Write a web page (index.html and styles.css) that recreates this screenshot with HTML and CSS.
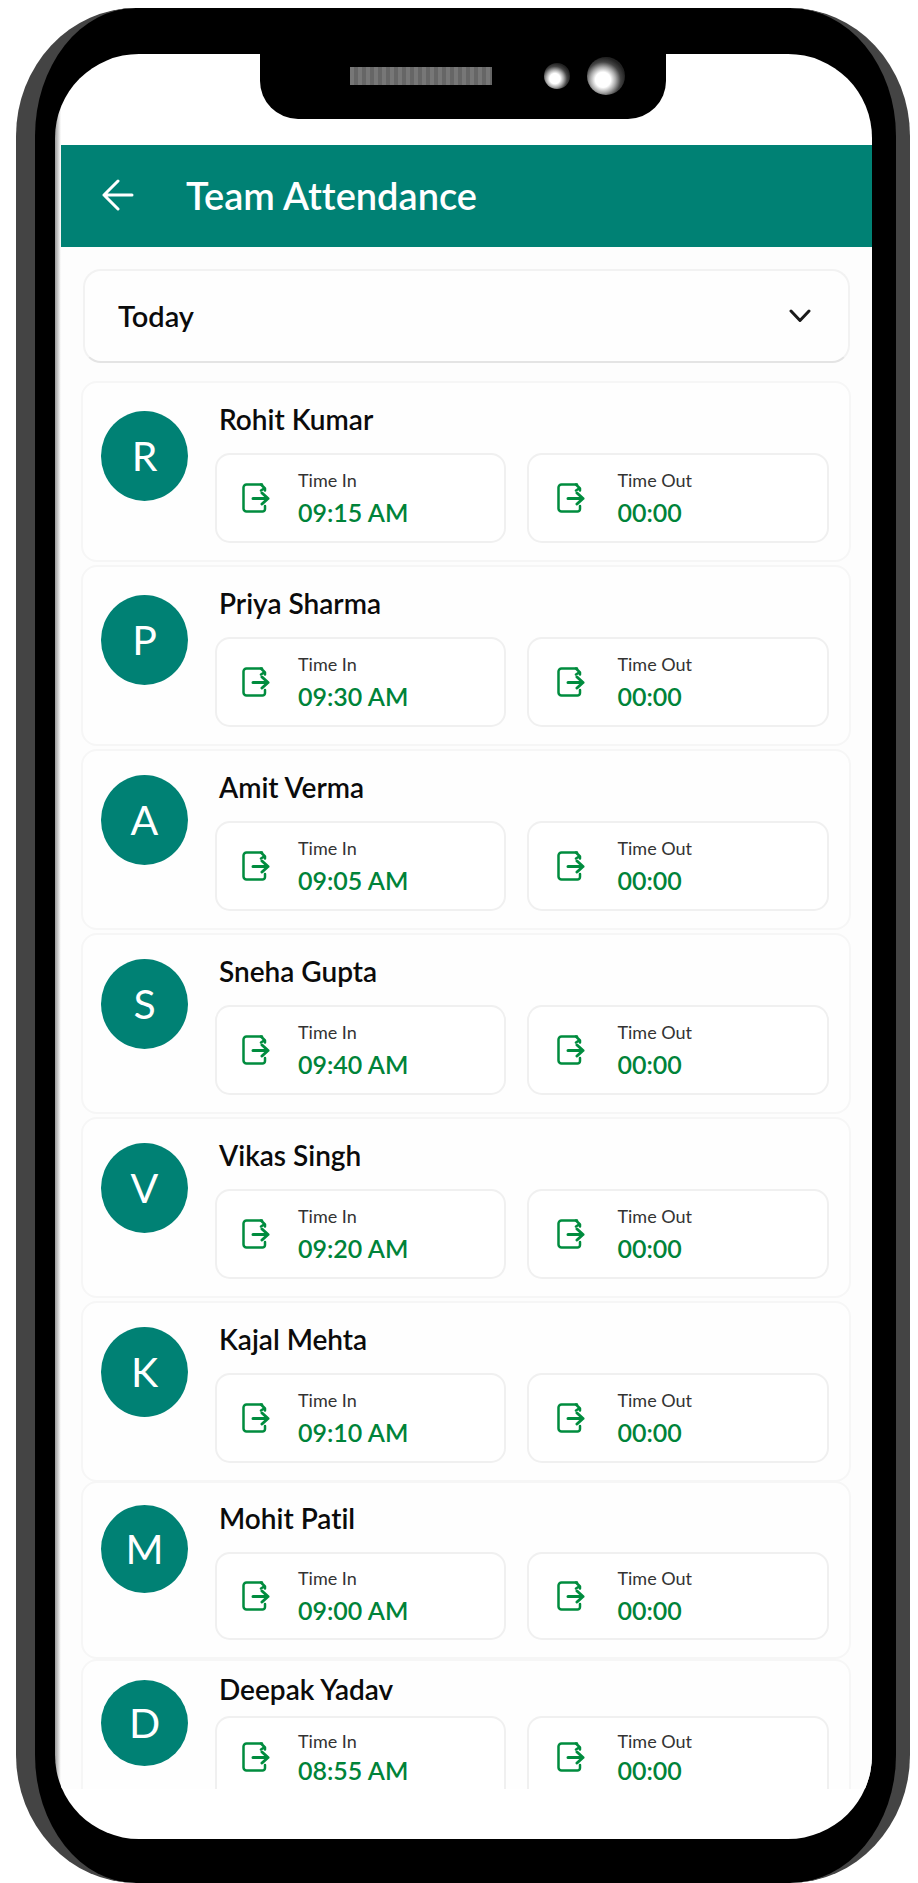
FILE: index.html
```html
<!DOCTYPE html>
<html lang="en">
<head>
  <meta charset="UTF-8">
  <meta name="viewport" content="width=device-width, initial-scale=1.0">
  <title>Team Attendance</title>
  <link rel="stylesheet" href="styles.css">
</head>
<body>
  <svg width="0" height="0" class="sprite" aria-hidden="true">
    <symbol id="icon-exit" viewBox="0 0 28 30">
      <path d="M20 1.500H4.500a3 3 0 0 0-3 3v21a3 3 0 0 0 3 3H20.500a2.500 2.500 0 0 0 2.500-2.500V23" />
      <path d="M19 1.500L23 5.500V7.500M19 7.500L22 5.500" />
      <path class="arrow" d="M11 15.500H26M20 10L26 15.500L20 21" />
    </symbol>
  </svg>

  <div class="phone">
    <div class="screen">
      <div class="notch">
        <span class="speaker"></span>
        <span class="sensor"></span>
        <span class="camera"></span>
      </div>
      <div class="app">
        <header class="app-header">
          <button class="back-button" aria-label="Back">
            <svg width="32" height="32" viewBox="0 0 32 32"><path d="M30 16H2M16 2L2 16L16 30" /></svg>
          </button>
          <h1 class="title">Team Attendance</h1>
        </header>
        <main class="content">
          <div class="filter">
            <select class="filter-select" aria-label="Period">
              <option>Today</option>
              <option>Yesterday</option>
              <option>This Week</option>
            </select>
            <svg class="chevron" width="22" height="14" viewBox="0 0 22 14"><path d="M2 2L11 11.500L20 2" /></svg>
          </div>
          <div class="team" id="team"></div>
        </main>
      </div>
    </div>
  </div>

  <script src="script.js"></script>
</body>
</html>
```
FILE: styles.css
```css
* {
  box-sizing: border-box;
}
body {
  font-family: Lato, "Liberation Sans", sans-serif;
  font-variant-ligatures: none;
  margin: 0;
  padding: 8px 8px 0 16px;
  background: #fff;
  overflow: hidden;
}
.sprite {
  position: absolute;
}
.phone {
  height: calc(100vh - 8px);
  min-height: 600px;
  padding: 46px 24px 44px 20px;
  background: #000;
  border: 0 solid #444;
  border-left-width: 19px;
  border-right-width: 14px;
  border-radius: 120px / 128px;
}
.screen {
  height: 100%;
  display: flex;
  flex-direction: column;
  background: linear-gradient(90deg, #999, #fff 6px);
  border-radius: 84px;
  overflow: hidden;
  padding: 0 0 50px 6px;
}
.notch {
  height: 65px;
  width: 406px;
  flex-shrink: 0;
  margin: 0 auto 26px 199px;
  padding: 0 40px 21px 90px;
  display: flex;
  align-items: center;
  background: #000;
  border-radius: 0 0 38px 38px;
}
.speaker {
  width: 142px;
  height: 18px;
  margin-right: 52px;
  background: repeating-linear-gradient(90deg, #777 0 4px, #666 4px 8px);
}
.sensor, .camera {
  flex-shrink: 0;
  border-radius: 50%;
  background: radial-gradient(circle at 42% 60%, #fff 0 24%, #aaa 40%, #444 56%, #222 70%);
}
.sensor {
  width: 26px;
  height: 26px;
  margin-right: 17px;
}
.camera {
  width: 38px;
  height: 38px;
}
.app {
  flex: 1;
  min-height: 0;
  display: flex;
  flex-direction: column;
  background: #fdfdfd;
}
.app-header {
  height: 102px;
  flex-shrink: 0;
  display: flex;
  align-items: center;
  padding: 0 41px 2px;
  background: #008174;
  color: #fff;
}
.back-button {
  display: flex;
  padding: 0;
  margin-right: 52px;
  background: none;
  border: none;
  cursor: pointer;
}
.back-button svg, .chevron {
  fill: none;
  stroke: #fff;
  stroke-width: 3;
  stroke-linecap: round;
  stroke-linejoin: round;
}
.title {
  margin: 0;
  font-size: 38px;
  line-height: 44px;
  font-weight: 600;
}
.content {
  flex: 1;
  min-height: 0;
  padding: 22px 21px 0 20px;
  overflow: hidden;
}
.filter {
  display: grid;
  align-items: center;
  margin: 0 1px 18px 2px;
}
.filter-select {
  grid-area: 1 / 1;
  height: 94px;
  padding: 0 33px;
  appearance: none;
  background: #fefefe;
  border: 2px solid #f2f2f2;
  border-bottom-color: #e4e4e4;
  border-radius: 18px;
  font: 600 29px/34px Lato, "Liberation Sans", sans-serif;
  color: #0b0b0b;
}
.chevron {
  grid-area: 1 / 1;
  justify-self: end;
  margin-right: 39px;
  stroke: #1a1a1a;
  pointer-events: none;
}
.team {
  display: flex;
  flex-direction: column;
  gap: 3px;
}
.card {
  display: flex;
  flex-shrink: 0;
  height: 181px;
  padding: 0 20px 0 18px;
  background: #fefefe;
  border: 2px solid #f6f6f6;
  border-radius: 16px;
}
.avatar {
  flex-shrink: 0;
  width: 87px;
  height: 90px;
  margin: 24px 27px 0 0;
  display: flex;
  align-items: center;
  justify-content: center;
  background: #008174;
  border-radius: 50%;
  color: #fff;
  font-size: 41px;
  line-height: 48px;
}
.card:nth-child(-n+2) .avatar {
  margin-top: 28px;
}
.details {
  flex: 1;
}
.name {
  margin: 0 0 17px;
  padding: 19px 0 0 4px;
  font-size: 28px;
  line-height: 34px;
  font-weight: 600;
  color: #0b0b0b;
}
.times {
  display: grid;
  grid-template-columns: 29fr 30fr;
  gap: 21px;
}
.time-box {
  height: 90px;
  display: flex;
  align-items: center;
  gap: 28px;
  padding: 0 25px;
  background: #fff;
  border: 2px solid #f0f0f0;
  border-radius: 15px;
}
.time-box:last-child {
  gap: 32px;
  padding: 0 28px;
}
.time-icon {
  width: 28px;
  height: 30px;
  fill: none;
  stroke: #008c3e;
  stroke-width: 2.5;
  stroke-linecap: round;
  stroke-linejoin: round;
}
.arrow {
  stroke-width: 3;
}
.time-label {
  font-size: 18px;
  line-height: 28px;
  color: #333;
}
.time-value {
  font-size: 25px;
  line-height: 36px;
  font-weight: 600;
  color: #008339;
}

/* rows get tighter towards the end of the list */
.card:nth-last-child(3) {
  margin-bottom: -4px;
}
.card:nth-last-child(2) {
  height: 178px;
  margin-bottom: -3px;
}
.card:nth-last-child(2) .avatar {
  height: 88px;
  margin-top: 22px;
}
.card:nth-last-child(2) .name {
  padding-top: 18px;
}
.card:nth-last-child(2) .time-box {
  height: 88px;
}
.card:last-child .avatar {
  height: 86px;
  margin-top: 19px;
}
.card:last-child .name {
  margin-bottom: 10px;
  padding-top: 11px;
}
.card:last-child .time-box {
  height: 90px;
  padding-bottom: 8px;
}
.card:last-child .time-label {
  line-height: 26px;
}
.card:last-child .time-value {
  line-height: 32px;
}
```
FILE: script.js
```
const team = [
  { name: 'Rohit Kumar', timeIn: '09:15 AM' },
  { name: 'Priya Sharma', timeIn: '09:30 AM' },
  { name: 'Amit Verma', timeIn: '09:05 AM' },
  { name: 'Sneha Gupta', timeIn: '09:40 AM' },
  { name: 'Vikas Singh', timeIn: '09:20 AM' },
  { name: 'Kajal Mehta', timeIn: '09:10 AM' },
  { name: 'Mohit Patil', timeIn: '09:00 AM' },
  { name: 'Deepak Yadav', timeIn: '08:55 AM' }
];

function timeBox(label, value) {
  return `<div class="time-box">
    <svg class="time-icon"><use href="#icon-exit" /></svg>
    <div>
      <div class="time-label">${label}</div>
      <div class="time-value">${value}</div>
    </div>
  </div>`;
}

document.getElementById('team').innerHTML = team.map(member => `
  <article class="card">
    <div class="avatar">${member.name[0]}</div>
    <div class="details">
      <h2 class="name">${member.name}</h2>
      <div class="times">
        ${timeBox('Time In', member.timeIn)}
        ${timeBox('Time Out', '00:00')}
      </div>
    </div>
  </article>`).join('');
```
